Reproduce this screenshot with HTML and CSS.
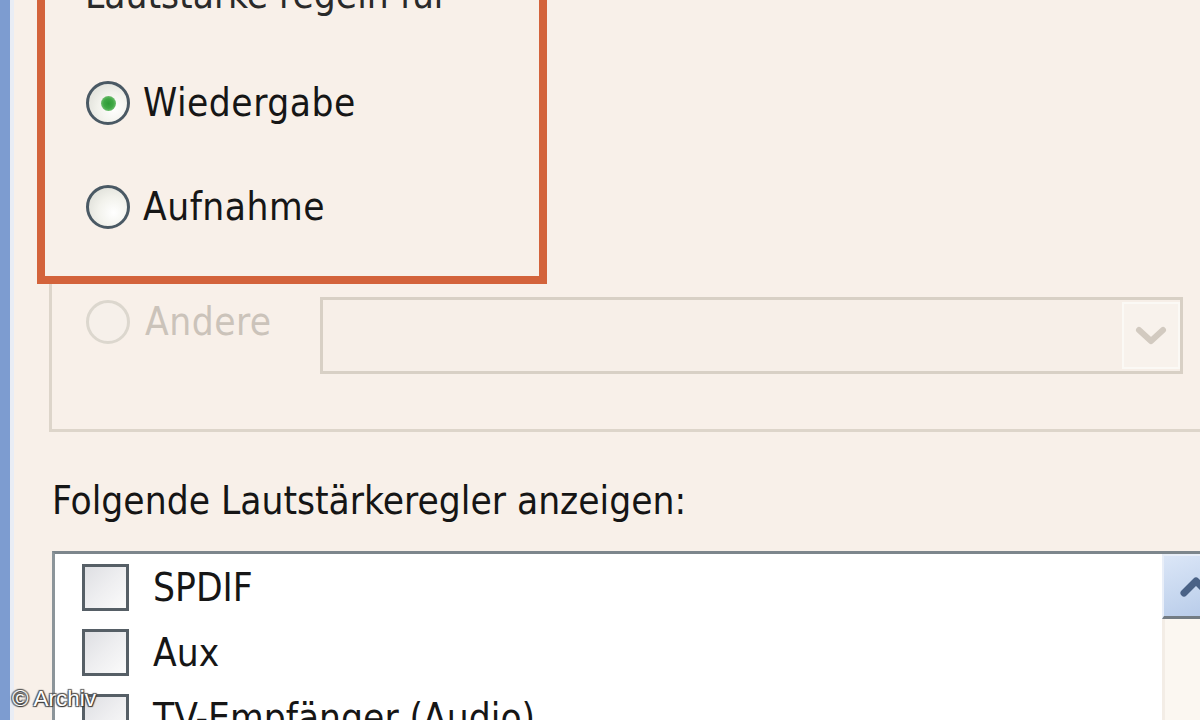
FILE: index.html
```html
<!DOCTYPE html>
<html lang="de">
<head>
<meta charset="utf-8">
<title>Lautstärke regeln für</title>
<link rel="stylesheet" href="styles.css">
</head>
<body>
<div class="screen">
  <div class="edge"></div>
  <div class="pane">
    <div class="group">
      <div class="mark"></div>
      <div class="group-title">Lautstärke regeln für</div>
      <div class="radio-row row-play"><span class="radio checked"><span class="dot"></span></span><span class="label">Wiedergabe</span></div>
      <div class="radio-row row-rec"><span class="radio"></span><span class="label">Aufnahme</span></div>
      <div class="other-row">
        <div class="radio-row disabled"><span class="radio"></span><span class="label">Andere</span></div>
        <div class="combo">
          <div class="combo-btn">
            <svg width="34" height="22" viewBox="0 0 34 22"><path d="M5 5 L17 16 L29 5" fill="none" stroke="#d2cac0" stroke-width="6" stroke-linecap="round" stroke-linejoin="round"/></svg>
          </div>
        </div>
      </div>
    </div>
    <div class="list-label">Folgende Lautstärkeregler anzeigen:</div>
    <div class="list">
      <div class="items">
        <div class="item"><span class="check"></span><span class="label">SPDIF</span></div>
        <div class="item"><span class="check"></span><span class="label">Aux</span></div>
        <div class="item"><span class="check"></span><span class="label">TV-Empfänger (Audio)</span></div>
      </div>
      <div class="scrollbar">
        <div class="sb-up">
          <svg width="34" height="24" viewBox="0 0 34 24"><path d="M5 19 L17 7 L29 19" fill="none" stroke="#4a6286" stroke-width="7" stroke-linecap="round" stroke-linejoin="round"/></svg>
        </div>
        <div class="sb-track"></div>
      </div>
    </div>
  </div>
  <div class="watermark">© Archiv</div>
</div>
</body>
</html>
```

FILE: styles.css
```css
* { box-sizing: border-box; }
html, body {
  margin: 0;
  padding: 0;
  width: 1200px;
  height: 720px;
  overflow: hidden;
  background: #f8f0e9;
}
.screen {
  position: relative;
  display: flex;
  width: 1200px;
  height: 720px;
  overflow: hidden;
  font-family: "DejaVu Sans Condensed", "DejaVu Sans", sans-serif;
  font-size: 38.5px;
  color: #161616;
}
.edge {
  flex: 0 0 14px;
  background: #7d9cd0;
  border-right: 4px solid #e9edf5;
}
.pane {
  flex: 1;
  min-width: 0;
  padding-left: 35px;
  display: flex;
  flex-direction: column;
}
.group {
  position: relative;
  margin-top: -34px;
  margin-right: -30px;
  border: 3px solid #ddd5ca;
  padding-bottom: 55px;
}
.mark {
  position: absolute;
  left: -15px;
  top: 0;
  width: 510px;
  height: 315px;
  border: 8px solid #d3633b;
  background: #f8f0e9;
  z-index: 0;
}
.group-title {
  position: relative;
  z-index: 1;
  margin-top: 3px;
  margin-left: 33px;
  line-height: 46px;
  color: #2a2a2a;
}
.radio-row {
  position: relative;
  z-index: 1;
  display: flex;
  align-items: center;
  gap: 13px;
  height: 50px;
  margin-left: 34px;
  line-height: 50px;
}
.radio-row .label { letter-spacing: 0.5px; }
.row-play { margin-top: 60px; }
.row-rec { margin-top: 54px; }
.radio {
  position: relative;
  flex: 0 0 44px;
  width: 44px;
  height: 44px;
  border-radius: 50%;
  border: 3px solid #4a5964;
  background: radial-gradient(circle at 65% 65%, #ffffff 0%, #f2f2ec 45%, #d8d9d2 100%);
  display: flex;
  align-items: center;
  justify-content: center;
}
.radio .dot {
  width: 15px;
  height: 15px;
  border-radius: 50%;
  background: radial-gradient(circle, #2f9a37 0%, #3fa845 45%, #9ed49c 100%);
}
.other-row {
  display: flex;
  align-items: flex-start;
  margin-top: 65px;
}
.radio-row.disabled {
  flex: 0 0 234px;
  color: #cbc3ba;
}
.radio-row.disabled .label { margin-left: 2px; }
.radio-row.disabled .radio {
  border-color: #dcd7ce;
  background: #f6f0ea;
}
.combo {
  width: 863px;
  height: 77px;
  border: 3px solid #d8d0c5;
  background: #f7efe8;
  display: flex;
  justify-content: flex-end;
  padding: 2px 0;
}
.combo-btn {
  width: 58px;
  height: 100%;
  border: 2px solid #fbf9f5;
  background: #f8f2ec;
  display: flex;
  align-items: center;
  justify-content: center;
}
.list-label {
  margin-top: 46px;
  margin-left: 3px;
  line-height: 46px;
  color: #151515;
}
.list {
  margin-top: 27px;
  margin-left: 3px;
  margin-right: -30px;
  flex: 1;
  display: flex;
  border-top: 3px solid #7d868c;
  border-left: 3px solid #8c959a;
  background: #ffffff;
}
.items {
  flex: 1;
  padding-top: 1px;
}
.item {
  display: flex;
  align-items: center;
  height: 65px;
  padding-left: 27px;
  gap: 24px;
  line-height: 65px;
}
.check {
  flex: 0 0 47px;
  width: 47px;
  height: 47px;
  border: 3px solid #565f66;
  background: linear-gradient(135deg, #dedfe3 0%, #eeeef0 50%, #fbfbfb 100%);
}
.scrollbar {
  flex: 0 0 68px;
  display: flex;
  flex-direction: column;
  background: #fbf8f3;
}
.sb-up {
  height: 65px;
  border: 2px solid #e8eef8;
  border-bottom: 3px solid #737c84;
  background: linear-gradient(160deg, #dbe6f7 0%, #c4d5ee 60%, #b4c8e8 100%);
  display: flex;
  align-items: center;
  justify-content: center;
}
.sb-track {
  flex: 1;
  border-left: 3px solid #f3ede6;
  background: #fbf7f1;
}
.watermark {
  position: absolute;
  left: 12px;
  bottom: 9px;
  font-family: "Liberation Sans", Arial, sans-serif;
  font-size: 22.5px;
  line-height: 24px;
  color: #ffffff;
  text-shadow: 1px 1px 1px #333, -1px -1px 1px #555, 1px -1px 1px #555, -1px 1px 1px #555;
  z-index: 5;
}
```
